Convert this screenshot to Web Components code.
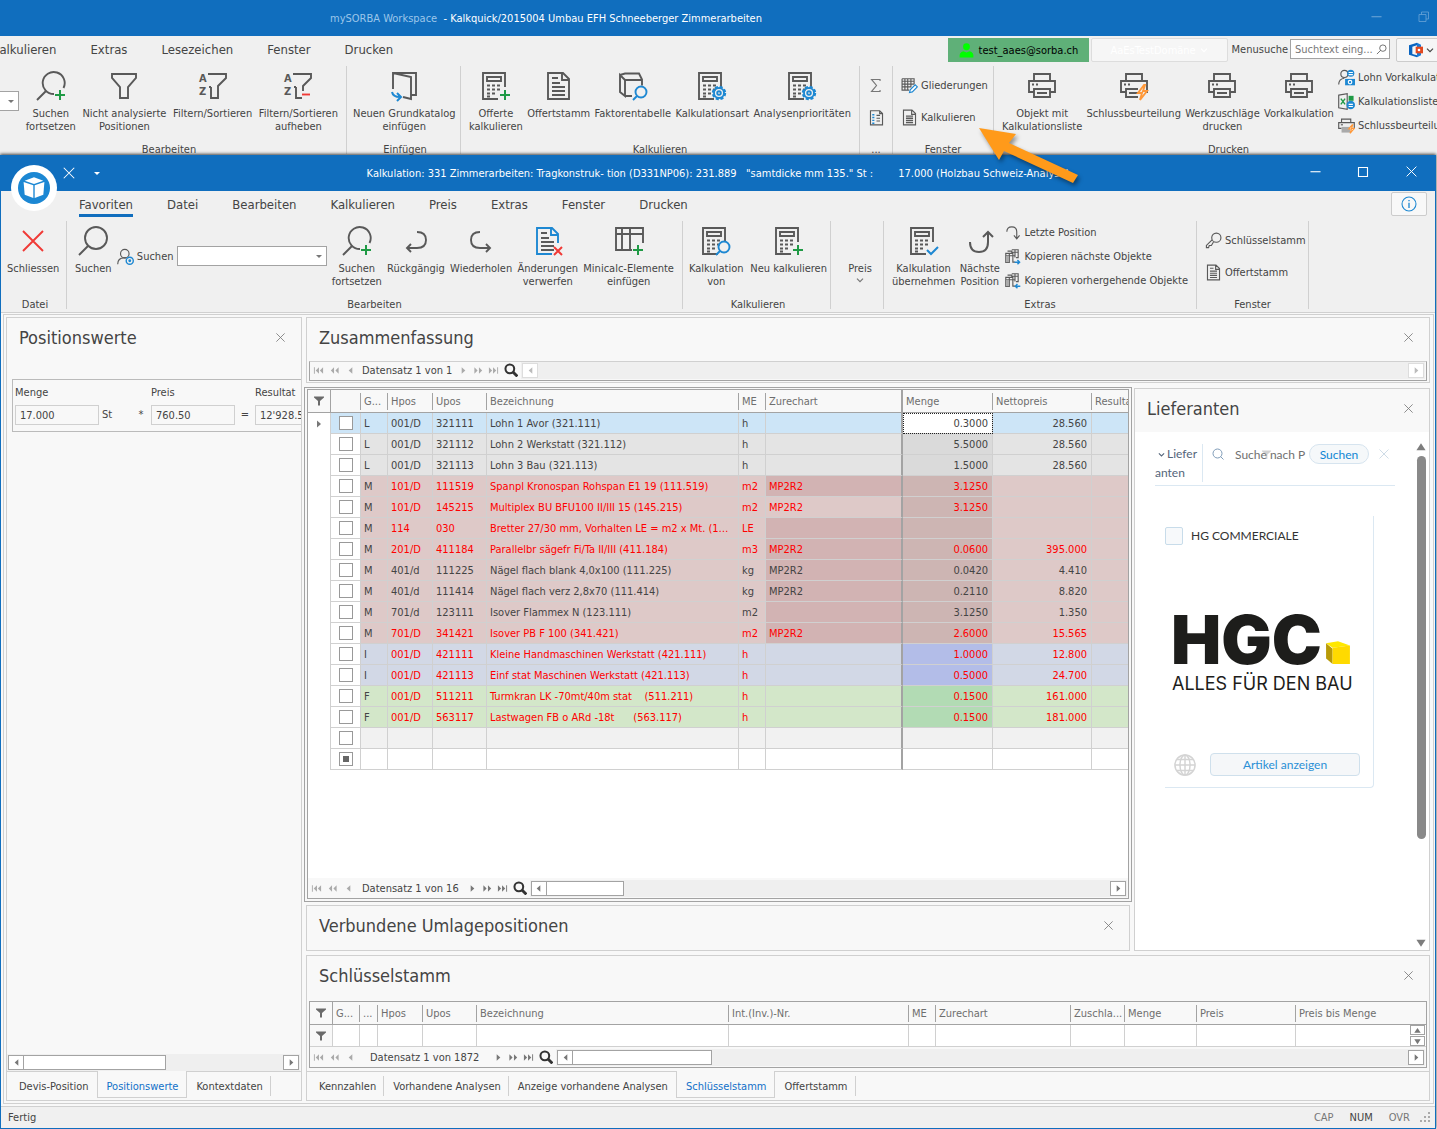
<!DOCTYPE html>
<html lang="de">
<head>
<meta charset="utf-8">
<title>mySORBA Workspace</title>
<style>
  html, body { margin: 0; height: 100%; }
  body {
    font: 11px/13px "DejaVu Sans Condensed", "DejaVu Sans", sans-serif;
    color: #444;
    --blue: #106ebe;
    --line: #d0d0d0;
    --dark-line: #a3a3a3;
    --chrome: #f0f0f0;
    --panel: #f8f8f8;
  }
</style>
</head>
<body>
<sorba-app></sorba-app>

<script>
  /* ---------- icons ---------- */
  const G = '#595959', B = '#1e88d2', GR = '#1f9a45', R = '#f03a36', O = '#ff9838';

  const calc = `<path d="M25 17V3H3v26h15" stroke="${G}"/><path d="M7 7h14v4H7z" stroke="${G}"/>
    <path d="M7 15.500h3m2 0h3m2 0h3M7 19.500h3m2 0h3m2 0h3M7 23.500h3m2 0h3M7 26.500h3" stroke="${G}"/>`;
  const page = `<path d="M5 3h15l6 6v20H5z" stroke="${G}"/><path d="M19 3v7h7" stroke="${G}"/>
    <path d="M9 8h6M9 13h8M9 17h13M9 21h13M9 25h13" stroke="${G}"/>`;
  const printer = `<path d="M8 11V4h16v7M8 22H3V11h26v11h-5M8 19h16v8H8z" stroke="${G}"/>
    <path d="M6 14.500h2m2 0h2M11 23h10" stroke="${G}"/>`;
  const plus = `<path d="M25 20v10M20 25h10" stroke="${GR}" stroke-width="2"/>`;
  const gear = `<circle cx="23" cy="23" r="6" stroke="${B}" stroke-width="2.400" stroke-dasharray="3 1.700"/>
    <circle cx="23" cy="23" r="5" stroke="${B}"/><circle cx="23" cy="23" r="1.800" stroke="${B}"/>`;
  const lens = `<circle cx="24" cy="22" r="5.500" stroke="${B}"/><path d="M20 26l-4 4" stroke="${B}"/>`;
  const az = `<g font-size="11" font-weight="bold" fill="${G}"><text x="2" y="12">A</text><text x="2" y="25">Z</text></g>`;
  const grids = `<path d="M2.500 7.500h5v13h-5zM2.500 11h5M7.500 7.500h5v13M5 4.500h6v3M11 2.500h9v11h-3M11 6h9M15.500 2.500v11M12.500 11v9h3M8 11h7" stroke="${G}"/>
    <path d="M3 11h4v9H3z" fill="#aaa"/>`;

  const ICONS = {
    search: `<circle cx="19" cy="13" r="11" stroke="${G}"/><path d="M11 21l-9 9" stroke="${G}"/>`,
    searchPlus: `<path d="M28.500 18A11 11 0 1 0 19 24" stroke="${G}"/><path d="M11 21l-9 9" stroke="${G}"/>${plus}`,
    funnel: `<path d="M4 4h24v4l-8 9v11h-8V17L4 8z" stroke="${G}"/>`,
    azFunnel: az + `<path d="M11 4h18v4l-8 8v12h-7V17M14 17h-2" stroke="${G}"/>`,
    azFunnelOff: az + `<path d="M11 4h18v4l-8 8v5M14 17v11h6M14 17h-2" stroke="${G}"/><path d="M20 24.500h8" stroke="${R}"/>`,
    door: `<path d="M5 19V3h23v22h-5M5 3l18 4v22l-8-2" stroke="${G}"/><path d="M4 22q1 5 8 5M9 23l4 4-4 4" stroke="${B}" stroke-width="2"/>`,
    calcPlus: calc + plus,
    calcGear: calc + gear,
    calcLens: calc + lens,
    calcCheck: calc + `<path d="M19 25l4 4 7-7" stroke="${B}" stroke-width="2"/>`,
    page,
    pageX: page.replace(`"M5 3h15l6 6v20H5z" stroke="${G}"`, `"M20 29H5V3h15l6 6v9" stroke="${B}"`).replace(`"M19 3v7h7" stroke="${G}"`, `"M19 3v7h7" stroke="${B}"`)
      + `<path d="M22 22l8 8M30 22l-8 8" stroke="${R}" stroke-width="2"/>`,
    cube: `<path d="M3 5l5 5v16l-5-4zM3 5l5-1.500h14l3 6v6M8 10h17M8 26h7" stroke="${G}"/>${lens}`,
    printer,
    printerFlash: printer.replace('M8 19h16v8H8z', 'M20 27H8v-8h12') + `<path d="M26 15l-6 8h4l-2 7 7-9h-4l2-6z" stroke="${O}" fill="#f0f0f0"/>`,
    closeRed: `<path d="M6 6l20 20M26 6L6 26" stroke="${R}"/>`,
    undo: `<path d="M17 7q9 0 9 8t-9 8H7M11 19l-4 4 4 4" stroke="${G}"/>`,
    redo: `<path d="M15 7q-9 0-9 8t9 8h10M21 19l4 4-4 4" stroke="${G}"/>`,
    up: `<path d="M6 17q0 10 9 10t9-10V8M19 12l5-5 5 5" stroke="${G}" stroke-width="2"/>`,
    tablePlus: `<path d="M19 25H3V3h27v15M3 9h27M9 3v22M17 3v22" stroke="${G}"/>${plus}`,
    sigma: `<path d="M17 5.500V3.500H5l7 8.500-7 8.500h12v-2" stroke="#777"/>`,
    list: `<path d="M3.500 2.500h13l4 4v16h-17zM16.500 2.500v4h4" stroke="${G}"/><path d="M6 8h3M6 12h3M6 16h3M6 20h3" stroke="${B}" stroke-width="2"/><path d="M12 9h5M12 13h5M12 17h5" stroke="${G}"/>`,
    gridPen: `<path d="M1.500 2.500h17v8M1.500 2.500v16h10M1.500 6h17M1.500 10h17M1.500 14h13M5.500 2.500v16M9.500 2.500v16M14 2.500v12" stroke="${G}"/><path d="M12 22l1-4 7-7 3 3-7 7z" stroke="${B}" fill="#fff"/>`,
    pageSmall: `<path d="M3.500 1.500h12l5 5v16h-17zM15 1.500v6h5.500" stroke="${G}"/><path d="M7 10h10M7 13h10M7 16h10M7 19h10" stroke="${G}" stroke-width="2"/>`,
    pageThin: `<path d="M3.500 1.500h12l5 5v16h-17zM15 1.500v6h5.500M7 6h5M7 10h10M7 13h10M7 16h10M7 19h10" stroke="${G}"/>`,
    userCoin: `<circle cx="9" cy="7" r="5" stroke="${G}"/><path d="M1 22q0-8 8-9" stroke="${G}"/><circle cx="18" cy="6" r="5" fill="${B}"/><path d="M15 5h6M15 8h6" stroke="#fff"/><path d="M10 14h14v9H10z" fill="${B}"/><circle cx="17" cy="18.500" r="2.500" stroke="#fff"/>`,
    excel: `<path d="M1 3l12-2v22L1 21z" stroke="${G}"/><path d="M4 8l6 8M10 8l-6 8" stroke="${GR}" stroke-width="2"/><path d="M15 4h7v7h-7z" fill="${GR}"/><circle cx="18" cy="17" r="6" fill="${B}"/><path d="M15 16h6M15 19h6" stroke="#fff"/>`,
    printFlash: `<path d="M5 8V3h13v5M5 16H1V8h22v8" stroke="${G}"/><path d="M5 14h12v8H5z" fill="#aaa"/><path d="M4 11h3" stroke="${G}"/><path d="M20 11l-5 6h4l-2 6 6-7h-4l2-5z" fill="#fff" stroke="${O}"/>`,
    userGear: `<circle cx="11" cy="8" r="6" stroke="${G}"/><path d="M1 23q0-9 9-9h3" stroke="${G}"/><circle cx="18" cy="18" r="5" stroke="${B}" stroke-width="2"/><circle cx="18" cy="18" r="2" fill="${B}"/>`,
    lastPos: `<path d="M4 11q0-7 7-7t7 7v9M14 16l4 5 4-5" stroke="${G}"/>`,
    gridsNext: grids + `<path d="M15 20h7M19 17l3 3-3 3" stroke="${B}" stroke-width="2"/>`,
    gridsPrev: grids + `<path d="M16 20h7M19 17l-3 3 3 3" stroke="${B}" stroke-width="2"/>`,
    key: `<circle cx="16" cy="8" r="6.500" stroke="${G}"/><path d="M10 11l-8 8v3h3l1-3h3l3-5" stroke="${G}"/>`,
    filter: `<path d="M2 3h20v2l-8 7v9h-4v-9L2 5z" fill="#6a6a6a"/>`,
    close: `<path d="M3 3l18 18M21 3L3 21" stroke="currentColor" stroke-width="1.800"/>`,
    info: `<circle cx="12" cy="12" r="10.500" stroke="${B}"/><path d="M12 10v8M12 6v2" stroke="${B}" stroke-width="2"/>`,
    chevron: `<path d="M3 8l9 9 9-9" stroke="currentColor" stroke-width="3.600"/>`,
    glass: `<circle cx="10" cy="10" r="7.500" stroke="#333" stroke-width="3.500"/><path d="M15 15l8 8" stroke="#333" stroke-width="5"/>`,
    glassThin: `<circle cx="11" cy="11" r="9" stroke="currentColor" stroke-width="2"/><path d="M17 17l6 6" stroke="currentColor" stroke-width="2"/>`,
    glassLeft: `<circle cx="15" cy="9" r="7" stroke="currentColor"/><path d="M10 14l-8 8" stroke="currentColor"/>`,
    person: `<circle cx="12" cy="6" r="5.500" fill="#0f0"/><path d="M1 23q-1-9 6-10l5 2 5-2q7 1 6 10z" fill="#0f0"/>`,
    office: `<path d="M15 1L3 5v14l12 4v-3l-7-2V7l7-2z" fill="#0a64c0"/><path d="M15 1l6 3v16l-6 3z" fill="#1a7bd8"/><path d="M13 7h11v10H13z" fill="#e0481f"/><circle cx="18" cy="12" r="2" fill="#fff"/>`,
    min: `<path d="M1 12.500h22" stroke="currentColor" stroke-width="2.400"/>`,
    max: `<path d="M3 3h18v18H3z" stroke="currentColor" stroke-width="2.200"/>`,
    restore: `<path d="M2 7h14v14H2zM7 7V2h14v14h-5" stroke="currentColor" stroke-width="1.600"/>`,
    left: `<path d="M16 5v14l-8-7z" fill="currentColor"/>`,
    right: `<path d="M8 5v14l8-7z" fill="currentColor"/>`,
    upTri: `<path d="M12 3l11 17H1z" fill="currentColor"/>`,
    downTri: `<path d="M1 4h22L12 21z" fill="currentColor"/>`,
    navFirst: `<path d="M2 5h2v14H2zM13 5v14l-7-7zM22 5v14l-7-7z" fill="currentColor"/>`,
    navPrevPage: `<path d="M11 5v14l-7-7zM21 5v14l-7-7z" fill="currentColor"/>`,
    navNextPage: `<path d="M3 5v14l7-7zM13 5v14l7-7z" fill="currentColor"/>`,
    navLast: `<path d="M20 5h2v14h-2zM2 5v14l7-7zM11 5v14l7-7z" fill="currentColor"/>`,
    globe: `<circle cx="12" cy="12" r="11" stroke="#d4d4d4" stroke-width="1.600"/><ellipse cx="12" cy="12" rx="5.500" ry="11" stroke="#d4d4d4" stroke-width="1.600"/><path d="M12 1v22M1 12h22M3 6h18M3 18h18" stroke="#d4d4d4" stroke-width="1.600"/>`,
    app: `<circle cx="12" cy="12" r="12" fill="#1b87d3"/><path d="M12 4l7 2.500-7 2.500-7-2.500z" fill="#fff"/><path d="M4.200 7.500l7.300 2.500v9.500L5 17z" fill="#fff"/><path d="M19.800 7.500L12.500 10v9.500L19 17z" fill="#fff"/>`,
    yellowCube: `<path d="M1 4l11-2 11 4-16 2z" fill="#ffe800"/><path d="M1 4l6 5v14l-6-5z" fill="#b89a08"/><path d="M7 8l16-2v17H7z" fill="#ffda00"/>`
  };
  const BIG = ['search','searchPlus','funnel','azFunnel','azFunnelOff','door','calcPlus','calcGear','calcLens','calcCheck','page','pageX','cube','printer','printerFlash','closeRed','undo','redo','up','tablePlus'];

  class Base extends HTMLElement {
    constructor() {
      super();
      this.attachShadow({ mode: 'open' });
    }
    connectedCallback() {
      this.shadowRoot.innerHTML = `<style>
        *, *::before, *::after { box-sizing: border-box; }
        button, input, select { font: inherit; color: inherit; margin: 0; border-radius: 0; }
        button { border: 0; padding: 0; background: none; }
        a { color: inherit; text-decoration: none; }
        ${this.css()}
      </style>${this.html()}`;
    }
    css() { return ''; }
    html() { return '<slot></slot>'; }
    attr(name, fallback = '') { return this.getAttribute(name) ?? fallback; }
  }

  class SbIcon extends Base {
    css() {
      const s = this.attr('size', '16');
      return `:host { display: inline-block; flex: none; width: ${s}px; height: ${s}px; } svg { display: block; width: 100%; height: 100%; }`;
    }
    html() {
      const name = this.attr('name');
      const box = BIG.includes(name) ? 32 : 24;
      return `<svg viewBox="0 0 ${box} ${box}" fill="none" stroke-width="${box === 32 ? 1.9 : 1.6}" aria-hidden="true">${ICONS[name]}</svg>`;
    }
  }

  /* ---------- window chrome ---------- */
  class TitleBar extends Base {
    css() {
      return `
        :host { display: flex; height: 36px; background: var(--blue); color: #fff; align-items: center; }
        .title { flex: 1; text-align: center; white-space: pre; }
        .left, .right { display: flex; align-items: center; flex: none; min-width: 144px; }
        .right button { width: 48px; height: 36px; }
        :host([dim]) .right { color: #6aa3d6; margin-right: -59px; }
        :host([dim]) .left { min-width: 330px; }
        :host([dim]) .title { text-align: left; }
      `;
    }
    html() {
      const mid = this.hasAttribute('dim') ? 'restore' : 'max';
      return `<div class="left"><slot name="quick"></slot></div>
        <div class="title"><slot></slot></div>
        <div class="right">
          <button aria-label="Minimieren"><sb-icon name="min" size="11"></sb-icon></button>
          <button aria-label="Fenstergrösse"><sb-icon name="${mid}" size="12"></sb-icon></button>
          <button aria-label="Schliessen"><sb-icon name="close" size="13"></sb-icon></button>
        </div>`;
    }
  }

  class MenuTabs extends Base {
    css() {
      return `
        :host { display: flex; height: 29px; background: var(--chrome); }
        nav { display: flex; gap: 34px; font-size: 13px; line-height: 17px; padding: 5px 0 0 78px; }
        :host([cut]) nav { padding-left: 0; margin-left: -8px; }
        a { height: 20px; white-space: nowrap; }
        a.on { border-bottom: 3px solid var(--blue); height: 21px; }
        .tools { margin-left: auto; display: flex; }
      `;
    }
    html() {
      const on = this.attr('active');
      const items = this.attr('items').split(',');
      return `<nav>${items.map(t => `<a href="#" class="${t === on ? 'on' : ''}">${t}</a>`).join('')}</nav>
        <div class="tools"><slot></slot></div>`;
    }
  }

  class RibbonGroup extends Base {
    css() {
      return `
        :host {
          display: flex; flex-direction: column; flex: none; height: 92px; padding: 0 9px 0 8px;
          background: linear-gradient(var(--line), var(--line)) right 1px / 1px 88px no-repeat;
        }
        :host([last]) { background: none; }
        :host([tight]) { padding: 0 4px 0 6px; }
        .items { display: flex; justify-content: space-between; flex: 1; }
        .caption { text-align: center; height: 14px; white-space: nowrap; }
      `;
    }
    html() { return `<div class="items"><slot></slot></div><div class="caption">${this.attr('caption')}</div>`; }
  }

  class RibbonButton extends Base {
    css() {
      return `
        :host { display: block; }
        button { display: flex; flex-direction: column; align-items: center; gap: 5px; padding-top: 5px; white-space: pre; line-height: 13px; }
        .blank { width: 32px; height: 32px; }
      `;
    }
    html() {
      const icon = this.attr('icon');
      return `<button>${icon ? `<sb-icon name="${icon}" size="32"></sb-icon>` : '<span class="blank"></span>'}<span><slot></slot></span></button>`;
    }
  }

  class RibbonSmall extends Base {
    css() {
      return `
        :host { display: block; }
        button { display: flex; align-items: center; gap: 3px; height: 24px; white-space: nowrap; }
        :host([tall]) button { height: 32px; }
      `;
    }
    html() {
      const label = this.hasAttribute('label') ? ` aria-label="${this.attr('label')}"` : '';
      return `<button${label}><sb-icon name="${this.attr('icon')}" size="17"></sb-icon><slot></slot></button>`;
    }
  }

  /* ---------- docking ---------- */
  class DockPanel extends Base {
    css() {
      return `
        :host { display: flex; flex-direction: column; border: 1px solid var(--line); background: var(--panel); min-width: 0; overflow: hidden; }
        header { display: flex; align-items: center; justify-content: space-between; height: 43px; padding: 0 15px 4px 12px; flex: none; }
        h2 { margin: 0; font-size: 18px; line-height: 24px; font-weight: normal; white-space: nowrap; }
        header button { color: #777; display: flex; }
      `;
    }
    html() {
      return `<header><h2>${this.attr('heading')}</h2><button aria-label="Bereich schliessen"><sb-icon name="close" size="11"></sb-icon></button></header><slot></slot>`;
    }
  }

  class TabStrip extends Base {
    css() {
      return `
        :host { display: flex; height: 29px; flex: none; border-top: 1px solid var(--line); padding-left: 3px; }
        a { padding: 8px 8px 0 9px; height: 26px; white-space: nowrap; }
        a:not(.on):not(.before) { background: linear-gradient(var(--line), var(--line)) right 4px / 1px 20px no-repeat; }
        a.on { color: #1170c8; border: 1px solid var(--line); border-top: 0; margin-top: -1px; padding-top: 9px; height: 27px; background: var(--panel); }
      `;
    }
    html() {
      const items = this.attr('items').split(',');
      const on = items.indexOf(this.attr('active'));
      return items.map((t, i) => `<a href="#" class="${i === on ? 'on' : i === on - 1 ? 'before' : ''}">${t}</a>`).join('');
    }
  }

  class ScrollRow extends Base {
    css() {
      return `
        :host { display: flex; flex: 1; height: 17px; padding: 1px; background: #efefef; color: #777; }
        button { width: 16px; height: 15px; border: 1px solid var(--dark-line); background: #fff; display: grid; place-items: center; }
        .thumb { width: ${this.attr('thumb', '0')}px; height: 15px; border: 1px solid var(--dark-line); border-left: 0; background: #fff; }
        .end { margin-left: auto; }
        :host([disabled]) { color: #bbb; }
        :host([disabled]) button { border-color: #ddd; }
      `;
    }
    html() {
      const thumb = this.hasAttribute('thumb') ? '<div class="thumb"></div>' : '';
      return `<button aria-label="Nach links"><sb-icon name="left" size="11"></sb-icon></button>${thumb}
        <button class="end" aria-label="Nach rechts"><sb-icon name="right" size="11"></sb-icon></button>`;
    }
  }

  class RecordNav extends Base {
    css() {
      return `
        :host { display: flex; align-items: center; height: 20px; flex: none; padding-right: 1px; background: var(--panel); }
        :host([idle]) { height: 16px; }
        button { width: 16px; display: grid; place-items: center; color: #aaa; }
        .next { color: #777; width: 15px; }
        :host([idle]) .next { color: #aaa; }
        .text { padding: 0 ${this.attr('gap', '6')}px; white-space: nowrap; }
        .find { width: 20px; }
      `;
    }
    html() {
      const b = (icon, label, cls = '') => `<button class="${cls}" aria-label="${label}"><sb-icon name="${icon}" size="11"></sb-icon></button>`;
      const thumb = this.hasAttribute('thumb') ? `thumb="${this.attr('thumb')}"` : 'disabled';
      return b('navFirst', 'Erster') + b('navPrevPage', 'Seite zurück') + b('left', 'Zurück')
        + `<span class="text">${this.attr('text')}</span>`
        + b('right', 'Weiter', 'next') + b('navNextPage', 'Seite vor', 'next') + b('navLast', 'Letzter', 'next')
        + `<button class="find" aria-label="Suchen"><sb-icon name="glass" size="14"></sb-icon></button><scroll-row ${thumb}></scroll-row>`;
    }
  }

  /* ---------- tables ---------- */
  const tableCss = `
    table { border-collapse: separate; border-spacing: 0; table-layout: fixed; width: 100%; }
    th, td { padding: 0 4px 0 3px; overflow: hidden; white-space: pre; text-overflow: ellipsis; font-weight: normal; text-align: left; }
    th { height: 23px; color: #6e6e6e; border-bottom: 1px solid var(--dark-line); background: linear-gradient(var(--dark-line), var(--dark-line)) right 3px / 1px 17px no-repeat; }
    th:first-child { border-right: 1px solid var(--dark-line); background: none; }
    th:last-child { background: none; text-overflow: clip; padding-right: 0; }
    .mark { padding: 0; text-align: center; }
    .mark sb-icon { display: block; margin: 0 auto; color: #777; }
  `;

  // group, hpos, upos, text, unit, charge, amount, net, flags (r = red, d = shaded charge cell)
  const ROWS = [
    ['L', '001/D', '321111', 'Lohn 1 Avor (321.111)', 'h', '', '0.3000', '28.560', ''],
    ['L', '001/D', '321112', 'Lohn 2 Werkstatt (321.112)', 'h', '', '5.5000', '28.560', ''],
    ['L', '001/D', '321113', 'Lohn 3 Bau (321.113)', 'h', '', '1.5000', '28.560', ''],
    ['M', '101/D', '111519', 'Spanpl Kronospan Rohspan E1 19 (111.519)', 'm2', 'MP2R2', '3.1250', '', 'rd'],
    ['M', '101/D', '145215', 'Multiplex BU BFU100 II/III 15 (145.215)', 'm2', 'MP2R2', '3.1250', '', 'r'],
    ['M', '114', '030', 'Bretter 27/30 mm, Vorhalten LE = m2 x Mt. (114.030)', 'LE', '', '', '', 'rd'],
    ['M', '201/D', '411184', 'Parallelbr sägefr Fi/Ta II/III (411.184)', 'm3', 'MP2R2', '0.0600', '395.000', 'rd'],
    ['M', '401/d', '111225', 'Nägel flach blank 4,0x100 (111.225)', 'kg', 'MP2R2', '0.0420', '4.410', 'd'],
    ['M', '401/d', '111414', 'Nägel flach verz 2,8x70 (111.414)', 'kg', 'MP2R2', '0.2110', '8.820', 'd'],
    ['M', '701/d', '123111', 'Isover Flammex N (123.111)', 'm2', '', '3.1250', '1.350', 'd'],
    ['M', '701/D', '341421', 'Isover PB F 100 (341.421)', 'm2', 'MP2R2', '2.6000', '15.565', 'rd'],
    ['I', '001/D', '421111', 'Kleine Handmaschinen Werkstatt (421.111)', 'h', '', '1.0000', '12.800', 'r'],
    ['I', '001/D', '421113', 'Einf stat Maschinen Werkstatt (421.113)', 'h', '', '0.5000', '24.700', 'r'],
    ['F', '001/D', '511211', 'Turmkran LK -70mt/40m stat    (511.211)', 'h', '', '0.1500', '161.000', 'r'],
    ['F', '001/D', '563117', 'Lastwagen FB o ARd -18t      (563.117)', 'h', '', '0.1500', '181.000', 'r']
  ];

  class PositionGrid extends Base {
    css() {
      return `
        :host { display: block; background: #fff; min-width: 0; overflow: hidden; }
        ${tableCss}
        thead { background: var(--panel); }
        td { height: 21px; border-right: 1px solid var(--line); border-bottom: 1px solid var(--line); background: var(--bg, #fff); }
        td:last-child { border-right: 0; }
        td:first-child { border-bottom: 0; background: #fff; }
        td:nth-child(2) { background: var(--box, #fff); }
        tr > :nth-child(8) { border-right: 2px solid var(--dark-line); }
        th:nth-child(8) { background: none; }
        .num { text-align: right; }
        .amount { background: var(--amt, var(--bg, #fff)); }
        .L { --bg: #e4e4e4; --amt: #dadada; }
        .M { --bg: #dec9c8; --amt: #cdb5b3; }
        .I { --bg: #d2d8e6; --amt: #b3bde8; }
        .F { --bg: #d3e7c9; --amt: #b2dbb4; }
        .sel { --bg: #cde5f7; --box: #cde5f7; --amt: #fff; }
        .sel .amount { outline: 1px dotted #222; outline-offset: -1px; }
        .r td:nth-child(n+4) { color: #f00; }
        .d td:nth-child(8) { background: #d2b3b3; }
        .spare { --bg: #f1f1f1; }
        input { appearance: none; display: block; width: 14px; height: 14px; margin: 0 auto; border: 1px solid #999; background: #fff; }
        .part { background: #666 content-box; padding: 3px; }
      `;
    }
    html() {
      const widths = [23, 30, 27, 45, 54, 252, 27, 137, 90, 99];
      const heads = ['G...', 'Hpos', 'Upos', 'Bezeichnung', 'ME', 'Zurechart', 'Menge', 'Nettopreis', 'Resultat'];
      const box = cls => `<td class="mark"><input type="checkbox" class="${cls}" aria-label="Zeile wählen"></td>`;
      const blank = '<td></td>'.repeat(9);
      const body = ROWS.map((r, i) => `
        <tr class="${r[0]} ${i ? '' : 'sel'} ${[...r[8]].join(' ')}">
          <td class="mark">${i ? '' : '<sb-icon name="right" size="12"></sb-icon>'}</td>${box('')}
          ${r.slice(0, 6).map(c => `<td>${c}</td>`).join('')}
          <td class="num amount">${r[6]}</td><td class="num">${r[7]}</td><td></td>
        </tr>`).join('');
      return `<table>
        <colgroup>${widths.map(w => `<col style="width:${w}px">`).join('')}<col></colgroup>
        <thead><tr><th class="mark"><sb-icon name="filter" size="12"></sb-icon></th><th></th>${heads.map(h => `<th>${h}</th>`).join('')}</tr></thead>
        <tbody>${body}
          <tr class="spare"><td></td>${box('')}${blank}</tr>
          <tr><td></td>${box('part')}${blank}</tr>
        </tbody></table>`;
    }
  }

  class KeyGrid extends Base {
    css() {
      return `
        :host { display: block; min-width: 0; }
        ${tableCss}
        td { height: 22px; background: #fff; border-right: 1px solid var(--line); border-bottom: 1px solid var(--line); }
        th:nth-child(10) { padding-right: 0; }
        td:first-child { background: var(--panel); }
        td:last-child { border-right: 0; padding: 0 1px 0 0; }
        .spin { display: flex; flex-direction: column; gap: 1px; width: 15px; margin-left: auto; }
        .spin button { height: 10px; border: 1px solid var(--dark-line); background: #fff; color: #777; display: grid; place-items: center; }
      `;
    }
    html() {
      const widths = [23, 27, 18, 45, 54, 252, 180, 27, 135, 54, 72, 99];
      const heads = ['G...', '...', 'Hpos', 'Upos', 'Bezeichnung', 'Int.(Inv.)-Nr.', 'ME', 'Zurechart', 'Zuschla...', 'Menge', 'Preis', 'Preis bis Menge'];
      return `<table>
        <colgroup>${widths.map(w => `<col style="width:${w}px">`).join('')}<col></colgroup>
        <thead><tr><th class="mark"><sb-icon name="filter" size="12"></sb-icon></th>${heads.map(h => `<th>${h}</th>`).join('')}</tr></thead>
        <tbody><tr><td class="mark"><sb-icon name="filter" size="12"></sb-icon></td>${'<td></td>'.repeat(11)}
          <td><div class="spin"><button aria-label="Auf"><sb-icon name="upTri" size="7"></sb-icon></button><button aria-label="Ab"><sb-icon name="downTri" size="7"></sb-icon></button></div></td>
        </tr></tbody></table>`;
    }
  }

  /* ---------- side content ---------- */
  class PositionValues extends Base {
    css() {
      return `
        :host { display: flex; flex-direction: column; flex: 1; }
        .box { margin: 18px 0 0 5px; border: 1px solid #bbb; border-right: 0; height: 53px; padding: 6px 0 0 2px; display: flex; overflow: hidden; }
        label { display: block; flex: none; }
        input { display: block; width: 84px; height: 20px; margin-top: 6px; padding: 0 4px; border: 1px solid var(--line); background: var(--panel); }
        .op { flex: none; padding-top: 22px; text-align: center; width: 20px; }
        .unit { flex: none; padding: 22px 0 0 3px; width: 32px; }
        .fill { flex: 1; }
        scroll-row { flex: none; margin: 0 1px 0 0; }
      `;
    }
    html() {
      return `<div class="box">
          <label>Menge<input value="17.000"></label><span class="unit">St</span><span class="op">*</span>
          <label>Preis<input value="760.50"></label><span class="op">=</span>
          <label>Resultat<input value="12'928.50"></label>
        </div>
        <div class="fill"></div>
        <scroll-row thumb="142"></scroll-row>`;
    }
  }

  class SupplierList extends Base {
    css() {
      return `
        :host { display: flex; flex: 1; background: #fff; font: 12px/19px Lato, sans-serif; color: #54657a; min-height: 0; }
        .body { flex: 1; padding: 12px 18px 0 20px; min-width: 0; }
        .bar { display: flex; border-bottom: 1px solid #dbe8f2; height: 42px; align-items: flex-start; }
        .tab { width: 48px; height: 38px; border-right: 1px solid #dbe8f2; flex: none; word-break: break-all; }
        .tab sb-icon { margin: 0 2px 0 3px; }
        .bar > sb-icon { margin: 4px 0 0 9px; color: #7f9cb8; }
        .field { position: relative; flex: 1; margin-left: 11px; min-width: 0; }
        .field input { width: 100%; height: 20px; border: 0; padding: 0; background: none; }
        .field input::placeholder { color: #707070; }
        .field sb-icon { position: absolute; left: 26px; top: 5px; opacity: .3; }
        .go { border: 1px solid #d6e4ef; border-radius: 10px; background: #f5f8fa; color: #0f86d4; width: 60px; height: 20px; line-height: 17px; margin-left: 3px; }
        .clear { color: #c9d8e4; margin: 4px 5px 0 9px; display: flex; }
        .card { margin: 30px 0 0 10px; width: 209px; height: 272px; border: solid #dbe8f2; border-width: 0 1px 1px 0; border-radius: 0 0 4px 0; display: flex; flex-direction: column; }
        .name { display: flex; align-items: center; gap: 8px; padding-top: 10px; color: #333; }
        .name input { appearance: none; width: 18px; height: 18px; border: 1px solid #c8dcea; border-radius: 2px; background: #f7f9fb; }
        .logo { color: #1d1d1b; font-family: Inter, sans-serif; padding: 65px 0 0 6px; }
        .big { display: flex; align-items: flex-end; font-size: 67px; line-height: 60px; font-weight: 900; }
        .big sb-icon { margin: 0 0 5px 3px; }
        .claim { font-size: 18px; line-height: 24px; white-space: nowrap; padding: 2px 0 0 1px; }
        .foot { display: flex; align-items: center; gap: 14px; margin: auto 13px 11px 9px; }
        .foot button { flex: 1; height: 23px; border: 1px solid #cfe0ec; border-radius: 4px; background: #f5f7f9; color: #2a8fd6; }
        .scroll { width: 16px; display: flex; flex-direction: column; align-items: center; color: #7d7d7d; padding: 10px 0 2px; gap: 4px; }
        .thumb { width: 9px; flex: 386 0 0; background: #898989; border-radius: 5px; }
        .rest { flex: 92 0 0; }
      `;
    }
    html() {
      return `<div class="body">
          <div class="bar">
            <a href="#" class="tab"><sb-icon name="chevron" size="7"></sb-icon>Lieferanten</a>
            <sb-icon name="glassThin" size="12"></sb-icon>
            <div class="field"><input placeholder="Suche nach P" aria-label="Suche"><sb-icon name="filter" size="11"></sb-icon></div>
            <button class="go">Suchen</button>
            <button class="clear" aria-label="Leeren"><sb-icon name="close" size="12"></sb-icon></button>
          </div>
          <article class="card">
            <label class="name"><input type="checkbox">HG COMMERCIALE</label>
            <div class="logo"><div class="big">HGC<sb-icon name="yellowCube" size="26"></sb-icon></div><div class="claim">ALLES FÜR DEN BAU</div></div>
            <div class="foot"><sb-icon name="globe" size="22"></sb-icon><button>Artikel anzeigen</button></div>
          </article>
        </div>
        <div class="scroll"><sb-icon name="upTri" size="10"></sb-icon><div class="thumb"></div><div class="rest"></div><sb-icon name="downTri" size="10"></sb-icon></div>`;
    }
  }

  class StatusBar extends Base {
    css() {
      return `
        :host { display: flex; align-items: center; gap: 16px; height: 22px; flex: none; padding: 0 4px 0 7px; border-top: 1px solid var(--line); background: var(--chrome); color: #777; }
        .state { margin-right: auto; }
        .on { color: #444; }
        svg { margin-left: -6px; }
      `;
    }
    html() {
      return `<span class="on state">Fertig</span><span>CAP</span><span class="on">NUM</span><span>OVR</span>
        <svg width="11" height="11" fill="#aaa"><path d="M8 0h2v2H8zM4 4h2v2H4zM8 4h2v2H8zM0 8h2v2H0zM4 8h2v2H4zM8 8h2v2H8z"/></svg>`;
    }
  }

  /* ---------- page ---------- */
  class SorbaApp extends Base {
    css() {
      return `
        :host { display: flex; flex-direction: column; min-height: 100vh; background: var(--chrome); position: relative; overflow: hidden; }
        .back { height: 155px; overflow: hidden; flex: none; }
        .ribbon { display: flex; background: var(--chrome); }
        .product { color: #9cc6ea; }
        .user { background: #5fb078; color: #000; width: 141px; height: 24px; margin: 2px 2px 0 0; display: flex; align-items: center; gap: 5px; padding-left: 11px; }
        .domain { width: 137px; height: 24px; margin-top: 2px; border: 1px solid #ddd; border-radius: 2px; background: #f6f6f6; color: #fff; display: flex; align-items: center; justify-content: center; gap: 4px; }
        .menusearch { display: flex; align-items: center; gap: 2px; margin: 0 6px 3px 4px; white-space: nowrap; }
        .findbox { display: flex; align-items: center; width: 100px; height: 20px; border: 1px solid var(--dark-line); background: #fff; padding: 0 2px 0 4px; }
        .findbox input { flex: 1; min-width: 0; border: 0; padding: 0; outline: 0; background: none; }
        .findbox input::placeholder { color: #777; }
        .office { width: 48px; height: 24px; margin: 2px -7px 0 0; padding-left: 10px; border: 1px solid #ccc; border-radius: 2px; background: #f6f6f6; display: flex; align-items: center; gap: 3px; }
        .combo { position: relative; display: flex; align-items: center; gap: 3px; }
        .combo select { appearance: none; width: 150px; height: 20px; border: 1px solid var(--dark-line); background: #fff; }
        .combo::after { content: ""; position: absolute; right: 5px; border: 3px solid transparent; border-top-color: #777; border-bottom: 0; }
        .short { margin: 26px 0 0 -12px; height: 20px; }
        .short select { width: 31px; }
        .mid { margin-top: 26px; height: 20px; }
        .stack2 { padding-top: 4px; }
        .drop { display: block; width: 8px; height: 8px; margin: 1px auto; color: #777; }

        .front { flex: 1; display: flex; flex-direction: column; margin-right: 1px; border: solid var(--blue); border-width: 0 1px 1px; box-shadow: 0 -1px 3px #444; position: relative; background: var(--panel); }
        .front > .ribbon { border-bottom: 1px solid var(--line); }
        .badge { position: absolute; left: 10px; top: 10px; width: 46px; height: 46px; border-radius: 50%; background: #fff; display: grid; place-items: center; }
        .quick { display: flex; align-items: center; gap: 18px; padding-left: 61px; }
        .tri { border: 3px solid transparent; border-top-color: #fff; border-bottom: 0; }
        .info { width: 36px; height: 24px; margin: 1px 8px 0 0; border: 1px solid #ccc; border-radius: 2px; background: #f8f8f8; display: grid; place-items: center; }

        .dock { flex: 1; display: flex; gap: 2px; margin: 1px 1px 2px 2px; border: 1px solid var(--line); padding: 2px 3px 2px 2px; }
        .side { width: 296px; flex: none; }
        .main { flex: 1; display: flex; flex-direction: column; gap: 4px; min-width: 0; }
        .wide { margin-left: 2px; }
        .split { flex: 1; display: flex; gap: 2px; }
        .center { flex: 1; display: flex; flex-direction: column; gap: 3px; min-width: 0; }
        .active { flex: 1; display: flex; border: 1px solid var(--dark-line); padding: 1px 2px 2px; background: var(--panel); }
        .sheet { flex: 1; display: flex; flex-direction: column; border: 1px solid var(--dark-line); background: #fff; min-width: 0; }
        .sheet position-grid { flex: 1; }
        .inner { border: 1px solid var(--dark-line); margin: 2px 2px 3px; }
        .slim { margin: 0 2px 1px; border-top-color: var(--line); height: 20px; overflow: hidden; }
        .tied { margin: 0 2px 0 2px; height: 46px; }
        .supplier { width: 296px; flex: none; margin-top: 1px; }
        .arrow { position: absolute; left: 970px; top: 120px; pointer-events: none; filter: drop-shadow(2px 3px 2px #0006); }
      `;
    }
    html() {
      return `
        <section class="back">
          <title-bar dim><span class="product">mySORBA Workspace</span>  - Kalkquick/2015004 Umbau EFH Schneeberger Zimmerarbeiten</title-bar>
          <menu-tabs cut items="Kalkulieren,Extras,Lesezeichen,Fenster,Drucken">
            <button class="user"><sb-icon name="person" size="15"></sb-icon>test_aaes@sorba.ch</button>
            <button class="domain">AaEsTestDomäne<sb-icon name="chevron" size="8"></sb-icon></button>
            <label class="menusearch">Menusuche<span class="findbox"><input placeholder="Suchtext eing..."><sb-icon name="glassLeft" size="11"></sb-icon></span></label>
            <button class="office" aria-label="Office"><sb-icon name="office" size="16"></sb-icon><sb-icon name="chevron" size="8"></sb-icon></button>
          </menu-tabs>
          <div class="ribbon">
            <ribbon-group caption="Bearbeiten" style="width:347px;padding-left:0">
              <span class="combo short"><select aria-label="Suche"><option></option></select></span>
              <ribbon-button icon="searchPlus">Suchen
fortsetzen</ribbon-button>
              <ribbon-button icon="funnel">Nicht analysierte
Positionen</ribbon-button>
              <ribbon-button icon="azFunnel">Filtern/Sortieren</ribbon-button>
              <ribbon-button icon="azFunnelOff">Filtern/Sortieren
aufheben</ribbon-button>
            </ribbon-group>
            <ribbon-group tight caption="Einfügen" style="width:114px">
              <ribbon-button icon="door">Neuen Grundkatalog
einfügen</ribbon-button>
            </ribbon-group>
            <ribbon-group caption="Kalkulieren" style="width:399px">
              <ribbon-button icon="calcPlus">Offerte
kalkulieren</ribbon-button>
              <ribbon-button icon="page">Offertstamm</ribbon-button>
              <ribbon-button icon="cube">Faktorentabelle</ribbon-button>
              <ribbon-button icon="calcGear">Kalkulationsart</ribbon-button>
              <ribbon-button icon="calcGear">Analysenprioritäten</ribbon-button>
            </ribbon-group>
            <ribbon-group caption="..." style="width:33px">
              <div class="stack2"><ribbon-small tall icon="sigma" label="Summe"></ribbon-small><ribbon-small tall icon="list" label="Liste"></ribbon-small></div>
            </ribbon-group>
            <ribbon-group caption="Fenster" style="width:101px">
              <div class="stack2"><ribbon-small tall icon="gridPen">Gliederungen</ribbon-small><ribbon-small tall icon="pageSmall">Kalkulieren</ribbon-small></div>
            </ribbon-group>
            <ribbon-group last caption="Drucken" style="width:470px">
              <ribbon-button icon="printer">Objekt mit
Kalkulationsliste</ribbon-button>
              <ribbon-button icon="printerFlash">Schlussbeurteilung</ribbon-button>
              <ribbon-button icon="printer">Werkzuschläge
drucken</ribbon-button>
              <ribbon-button icon="printer">Vorkalkulation</ribbon-button>
              <div><ribbon-small icon="userCoin">Lohn Vorkalkulation</ribbon-small><ribbon-small icon="excel">Kalkulationsliste</ribbon-small><ribbon-small icon="printFlash">Schlussbeurteilung</ribbon-small></div>
            </ribbon-group>
          </div>
        </section>

        <section class="front">
          <title-bar><div slot="quick" class="quick"><sb-icon name="close" size="14"></sb-icon><span class="tri"></span></div>Kalkulation: 331 Zimmerarbeiten: Tragkonstruk- tion (D331NP06): 231.889   "samtdicke mm 135." St :        17.000 (Holzbau Schweiz-Analyse)</title-bar>
          <menu-tabs active="Favoriten" items="Favoriten,Datei,Bearbeiten,Kalkulieren,Preis,Extras,Fenster,Drucken">
            <button class="info" aria-label="Info"><sb-icon name="info" size="16"></sb-icon></button>
          </menu-tabs>
          <div class="ribbon">
            <ribbon-group tight caption="Datei" style="width:66px"><ribbon-button icon="closeRed">Schliessen</ribbon-button></ribbon-group>
            <ribbon-group caption="Bearbeiten" style="width:616px">
              <ribbon-button icon="search">Suchen</ribbon-button>
              <label class="combo mid"><sb-icon name="userGear" size="17"></sb-icon>Suchen<select><option></option></select></label>
              <ribbon-button icon="searchPlus">Suchen
fortsetzen</ribbon-button>
              <ribbon-button icon="undo">Rückgängig</ribbon-button>
              <ribbon-button icon="redo">Wiederholen</ribbon-button>
              <ribbon-button icon="pageX">Änderungen
verwerfen</ribbon-button>
              <ribbon-button icon="tablePlus">Minicalc-Elemente
einfügen</ribbon-button>
            </ribbon-group>
            <ribbon-group tight caption="Kalkulieren" style="width:148px">
              <ribbon-button icon="calcLens">Kalkulation
von</ribbon-button>
              <ribbon-button icon="calcPlus">Neu kalkulieren</ribbon-button>
            </ribbon-group>
            <ribbon-group caption="" style="width:53px;padding-left:13px"><ribbon-button>Preis<sb-icon class="drop" name="chevron" size="8"></sb-icon></ribbon-button></ribbon-group>
            <ribbon-group caption="Extras" style="width:313px">
              <ribbon-button icon="calcCheck">Kalkulation
übernehmen</ribbon-button>
              <ribbon-button icon="up">Nächste
Position</ribbon-button>
              <div><ribbon-small icon="lastPos">Letzte Position</ribbon-small><ribbon-small icon="gridsNext">Kopieren nächste Objekte</ribbon-small><ribbon-small icon="gridsPrev">Kopieren vorhergehende Objekte</ribbon-small></div>
            </ribbon-group>
            <ribbon-group caption="Fenster" style="width:112px">
              <div class="stack2"><ribbon-small tall icon="key">Schlüsselstamm</ribbon-small><ribbon-small tall icon="pageThin">Offertstamm</ribbon-small></div>
            </ribbon-group>
          </div>

          <div class="dock">
            <dock-panel class="side" heading="Positionswerte">
              <position-values></position-values>
              <tab-strip active="Positionswerte" items="Devis-Position,Positionswerte,Kontextdaten"></tab-strip>
            </dock-panel>
            <div class="main">
              <dock-panel class="wide" heading="Zusammenfassung">
                <div class="inner slim"><record-nav idle text="Datensatz 1 von 1" gap="4"></record-nav></div>
              </dock-panel>
              <div class="split">
                <div class="center">
                  <div class="active"><div class="sheet">
                    <position-grid></position-grid>
                    <record-nav text="Datensatz 1 von 16" thumb="77" gap="6"></record-nav>
                  </div></div>
                  <dock-panel class="tied" heading="Verbundene Umlagepositionen"></dock-panel>
                </div>
                <dock-panel class="supplier" heading="Lieferanten"><supplier-list></supplier-list></dock-panel>
              </div>
              <dock-panel class="wide" heading="Schlüsselstamm">
                <div class="inner"><key-grid></key-grid><record-nav text="Datensatz 1 von 1872" thumb="139" gap="12"></record-nav></div>
                <tab-strip active="Schlüsselstamm" items="Kennzahlen,Vorhandene Analysen,Anzeige vorhandene Analysen,Schlüsselstamm,Offertstamm"></tab-strip>
              </dock-panel>
            </div>
          </div>
          <status-bar></status-bar>
          <div class="badge"><sb-icon name="app" size="32"></sb-icon></div>
        </section>
        <svg class="arrow" width="115" height="70" aria-hidden="true"><path d="M9 8l37 6-7 9 69 32-5 8-69-32-5 9z" fill="#ff9a1a"/></svg>`;
    }
  }

  const parts = {
    'sb-icon': SbIcon, 'title-bar': TitleBar, 'menu-tabs': MenuTabs, 'ribbon-group': RibbonGroup,
    'ribbon-button': RibbonButton, 'ribbon-small': RibbonSmall, 'dock-panel': DockPanel, 'tab-strip': TabStrip,
    'scroll-row': ScrollRow, 'record-nav': RecordNav, 'position-grid': PositionGrid, 'key-grid': KeyGrid,
    'position-values': PositionValues, 'supplier-list': SupplierList, 'status-bar': StatusBar, 'sorba-app': SorbaApp
  };
  for (const [tag, cls] of Object.entries(parts)) customElements.define(tag, cls);
</script>
</body>
</html>
